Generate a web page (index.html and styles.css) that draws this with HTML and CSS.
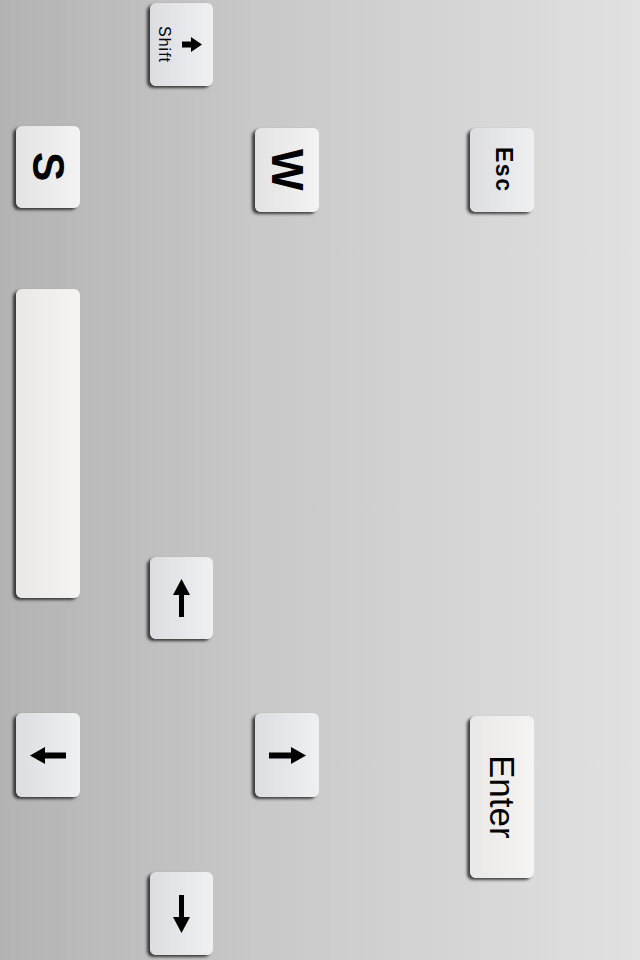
FILE: index.html
```html
<!DOCTYPE html>
<html>
<head>
<meta charset="utf-8">
<link rel="stylesheet" href="styles.css">
</head>
<body>
<div class="pad">
  <div class="col col1">
    <div class="key key-s"><span class="lbl lbl-big">S</span></div>
    <div class="key key-space warm"></div>
    <div class="key key-left cool">
      <svg width="36" height="17" viewBox="0 0 36 17"><polygon points="0,8.5 15,0 15,5.5 36,5.5 36,11.5 15,11.5 15,17" fill="#000"/></svg>
    </div>
  </div>
  <div class="col col2">
    <div class="key key-shift cool">
      <span class="lbl lbl-shift">Shift</span>
      <svg width="20" height="15" viewBox="0 0 20 15"><polygon points="20,7.5 9,0 9,4.5 0,4.5 0,10.5 9,10.5 9,15" fill="#000"/></svg>
    </div>
    <div class="key key-up cool">
      <svg width="17" height="38" viewBox="0 0 17 38"><polygon points="8.5,0 17,16 11,16 11,38 6,38 6,16 0,16" fill="#000"/></svg>
    </div>
    <div class="key key-down cool">
      <svg width="17" height="38" viewBox="0 0 17 38"><polygon points="8.5,38 17,22 11,22 11,0 6,0 6,22 0,22" fill="#000"/></svg>
    </div>
  </div>
  <div class="col col3">
    <div class="key key-w"><span class="lbl lbl-big">W</span></div>
    <div class="key key-right cool">
      <svg width="37" height="17" viewBox="0 0 37 17"><polygon points="37,8.5 22,0 22,5.5 0,5.5 0,11.5 22,11.5 22,17" fill="#000"/></svg>
    </div>
  </div>
  <div class="col col4">
    <div class="key key-esc cool"><span class="lbl lbl-esc">Esc</span></div>
    <div class="key key-enter warm"><span class="lbl lbl-enter">Enter</span></div>
  </div>
</div>
</body>
</html>
```
FILE: styles.css
```css
html, body {
  margin: 0;
  padding: 0;
}
body {
  width: 640px;
  height: 960px;
  overflow: hidden;
  background: linear-gradient(to right, #b3b3b3 0%, #c8c8c8 40%, #e1e1e1 100%);
  font-family: "Liberation Sans", Arial, sans-serif;
  color: #000;
}
.pad {
  display: flex;
  align-items: flex-start;
  padding-left: 16px;
}
.col {
  display: flex;
  flex-direction: column;
}
.col2 { margin-left: 70px; }
.col3 { margin-left: 42px; }
.col4 { margin-left: 151px; }

.key {
  width: 64px;
  height: 84px;
  border-radius: 6px;
  box-sizing: border-box;
  display: flex;
  align-items: center;
  justify-content: center;
  background: linear-gradient(to right, #e3e3e3 0%, #f3f3f3 100%);
  box-shadow: -3px 2px 3px rgba(0, 0, 0, 0.7);
}
.key.cool {
  background: linear-gradient(to right, #dcdde1 0%, #eff0f2 100%);
}
.key.warm {
  background: linear-gradient(to right, #e9e8e6 0%, #f5f4f2 100%);
}

.col2 .key { width: 63px; }

.key-s { margin-top: 126px; height: 82px; }
.key-space { margin-top: 81px; height: 309px; }
.key-left { margin-top: 115px; height: 84px; }

.key-shift { margin-top: 3px; height: 83px; gap: 10px; padding-right: 5px; }
.key-up { margin-top: 471px; height: 82px; }
.key-down { margin-top: 233px; height: 83px; }

.key-w { margin-top: 128px; }
.key-right { margin-top: 501px; }

.key-esc { margin-top: 128px; }
.key-enter { margin-top: 504px; height: 162px; }

.lbl {
  writing-mode: vertical-rl;
  line-height: 1;
}
.lbl-big {
  font-size: 44px;
  font-weight: bold;
}
.lbl-esc {
  font-size: 23px;
  font-weight: bold;
  letter-spacing: 1.5px;
  padding-left: 2px;
}
.lbl-enter {
  font-size: 35px;
  font-weight: normal;
}
.lbl-shift {
  font-size: 16px;
  letter-spacing: 1px;
}
```
